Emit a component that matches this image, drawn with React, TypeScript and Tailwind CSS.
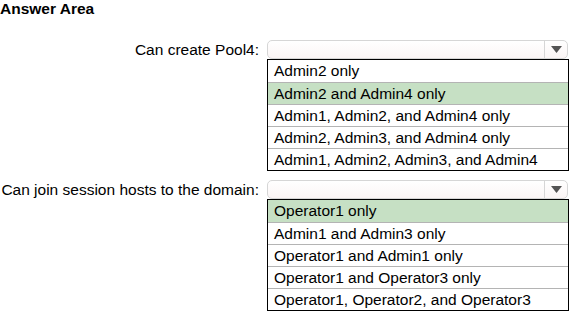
import React from "react";

const font = { fontFamily: '"Liberation Sans", Arial, sans-serif' };

function Select() {
  return (
    <div className="flex h-[19px] w-[301px] rounded-[5px] border border-[#d6d6d6] bg-gradient-to-b from-white to-[#fbf5f5]">
      <div className="flex-1" />
      <div className="flex w-[23px] items-center justify-center border-l border-[#d6d6d6]">
        <svg width="11" height="7" viewBox="0 0 11 7">
          <polygon points="0,0 11,0 5.5,7" fill="#555555" />
        </svg>
      </div>
    </div>
  );
}

function List({ items, selected }: { items: string[]; selected: number }) {
  return (
    <div className="ml-[267px] w-[302px] border border-black">
      {items.map((t, i) => (
        <div
          key={t}
          className={`flex h-[22px] items-center pl-[6px] text-[15.5px] text-black ${
            i > 0 ? "border-t border-[#b4b4b4]" : ""
          } ${i === selected ? "bg-[#c6e0c4]" : "bg-white"}`}
        >
          {t}
        </div>
      ))}
    </div>
  );
}

export default function App() {
  return (
    <div className="h-[311px] w-[570px] overflow-hidden bg-white text-black" style={font}>
      <div className="h-[40px] text-[15.5px] font-bold leading-[17px]">Answer Area</div>
      <div className="flex items-center">
        <div className="w-[267px] pr-[8px] text-right text-[15.5px] leading-[19px]">Can create Pool4:</div>
        <Select />
      </div>
      <List
        items={[
          "Admin2 only",
          "Admin2 and Admin4 only",
          "Admin1, Admin2, and Admin4 only",
          "Admin2, Admin3, and Admin4 only",
          "Admin1, Admin2, Admin3, and Admin4",
        ]}
        selected={1}
      />
      <div className="mt-[9px] flex items-center">
        <div className="w-[267px] whitespace-nowrap pr-[8px] text-right text-[15.5px] leading-[19px]">
          Can join session hosts to the domain:
        </div>
        <Select />
      </div>
      <List
        items={[
          "Operator1 only",
          "Admin1 and Admin3 only",
          "Operator1 and Admin1 only",
          "Operator1 and Operator3 only",
          "Operator1, Operator2, and Operator3",
        ]}
        selected={0}
      />
    </div>
  );
}
